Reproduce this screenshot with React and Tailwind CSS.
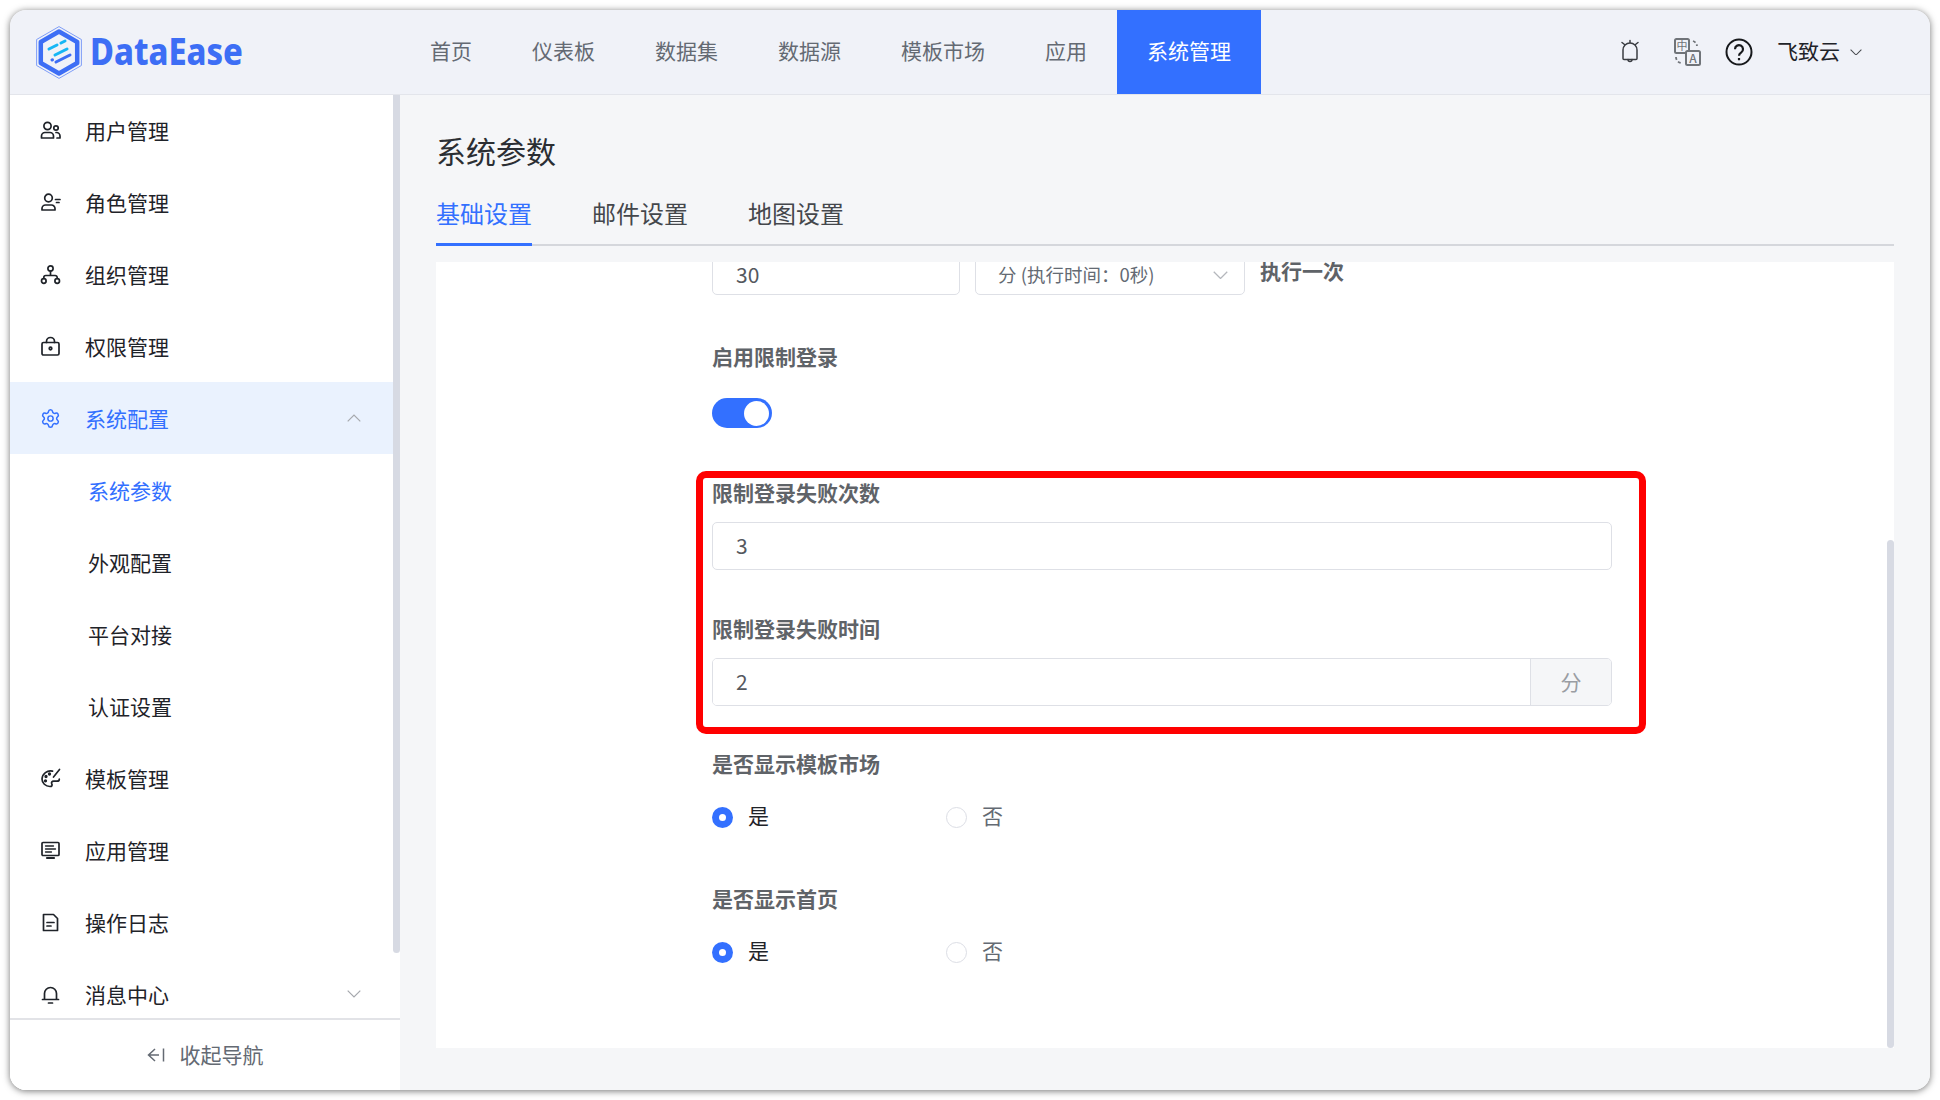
import React from 'react';
import { Settings } from 'lucide-react';

const NAV_ITEMS = ['首页', '仪表板', '数据集', '数据源', '模板市场', '应用'];

const Icon = ({ children, className = 'text-[#1f2329]' }) => (
  <svg viewBox="0 0 21 21" fill="none" stroke="currentColor" strokeWidth="1.7" strokeLinecap="round" strokeLinejoin="round" className={`w-[21px] h-[21px] shrink-0 ${className}`}>
    {children}
  </svg>
);

const UsersIcon = () => (
  <Icon>
    <circle cx="7.5" cy="6" r="3.6" />
    <path d="M1.5 18v-2a3.5 3.5 0 0 1 3.5-3.5h5a3.5 3.5 0 0 1 3.5 3.5v2z" />
    <circle cx="16" cy="8" r="2.2" />
    <path d="M16 12.5h.5a3.5 3.5 0 0 1 3.5 3.5v2h-3" />
  </Icon>
);
const RoleIcon = () => (
  <Icon>
    <circle cx="8.5" cy="6" r="3.8" />
    <path d="M2 18v-1.5A3.5 3.5 0 0 1 5.500 13h6a3.500 3.500 0 0 1 3.500 3.500V18z" />
    <path d="M15.500 7.500h4.500M16.500 10.500h2.500" />
  </Icon>
);
const OrgIcon = () => (
  <Icon>
    <circle cx="10.500" cy="4.500" r="2.600" />
    <circle cx="3.800" cy="17" r="2.300" />
    <circle cx="17.200" cy="17" r="2.300" />
    <path d="M10.500 7.200v4.300M3.800 14.500v-1a2 2 0 0 1 2-2h9.400a2 2 0 0 1 2 2v1" />
  </Icon>
);
const LockIcon = () => (
  <Icon>
    <rect x="2" y="6.500" width="17" height="12.500" rx="1.500" />
    <path d="M6.500 6.500V5.500a4 4 0 0 1 8 0v1" />
    <circle cx="10.500" cy="12.500" r="1.300" />
  </Icon>
);
const PaletteIcon = () => (
  <Icon>
    <path d="M12.500 3.200A8.500 8.500 0 0 0 2 11c0 4 3.500 7.500 8 7.500 2 0 2.500-1.300 1.800-2.500-.8-1.400.2-2.800 1.800-2.800H17c1.300 0 2.300-.7 2.300-2" />
    <path d="M19.500 1.500l-6 7.500" />
    <circle cx="6" cy="8.500" r=".8" />
    <circle cx="5.500" cy="12.800" r=".8" />
    <circle cx="9.500" cy="6" r=".8" />
  </Icon>
);
const MonitorIcon = () => (
  <Icon>
    <rect x="2" y="2.500" width="17" height="13" rx="1" />
    <path d="M5.500 6h8M5.500 9h10M5.500 12h6" strokeWidth="1.300" />
    <path d="M7 18h7" strokeWidth="2.200" />
  </Icon>
);
const DocIcon = () => (
  <Icon>
    <path d="M3.500 2.500h10l4 4v12h-14z" />
    <path d="M7 10.500h7M7 14h4" />
  </Icon>
);
const BellIcon = () => (
  <Icon>
    <path d="M4.500 15V9.500a6 6 0 0 1 12 0V15" />
    <path d="M2.500 15.500h16" />
    <path d="M8.500 19h4" />
  </Icon>
);

const Chevron = ({ up, className = 'w-[14px] text-[#a5a8ad]' }) => (
  <svg viewBox="0 0 14 8" fill="none" stroke="currentColor" strokeWidth="1.200" className={`shrink-0 ${className}`}>
    <path d={up ? 'M.7 7.300 7 1l6.300 6.300' : 'M.7.700 7 7 13.300.700'} />
  </svg>
);

const Logo = () => (
  <svg viewBox="0 0 46 53" fill="none" className="w-[46px] h-[53px] shrink-0">
    <path d="M23 .6 45.400 13.500v26L23 52.400.6 39.500v-26z" stroke="#7e9df7" strokeWidth="1" />
    <path d="M23 5.500 41.200 16v21L23 47.500 4.800 37V16z" stroke="#3d6ef5" strokeWidth="4.500" strokeLinejoin="round" />
    <path d="M13 23l8-4M25 17l4-2M19 29l12-6" stroke="#16b6f5" strokeWidth="3" strokeLinecap="round" />
    <path d="M20 36l14-7M16 34l.5-.2" stroke="#3d6ef5" strokeWidth="3" strokeLinecap="round" />
  </svg>
);

const MENU_TOP = [
  { label: '用户管理', icon: <UsersIcon /> },
  { label: '角色管理', icon: <RoleIcon /> },
  { label: '组织管理', icon: <OrgIcon /> },
  { label: '权限管理', icon: <LockIcon /> },
];
const SUB_MENU = ['系统参数', '外观配置', '平台对接', '认证设置'];
const MENU_BOTTOM = [
  { label: '模板管理', icon: <PaletteIcon /> },
  { label: '应用管理', icon: <MonitorIcon /> },
  { label: '操作日志', icon: <DocIcon /> },
];

const MenuRow = ({ item }) => (
  <div className="flex items-center h-[72px] pl-[30px] shrink-0 text-[#1f2329]">
    <span className="mr-[24px] flex">{item.icon}</span>
    <span>{item.label}</span>
  </div>
);

const Sidebar = () => (
  <aside className="w-[390px] shrink-0 bg-white flex flex-col relative">
    <div className="flex-1 overflow-hidden">
      <div className="-mt-[1px] w-[383px] text-[21px] leading-[32px]">
        {MENU_TOP.map((item) => <MenuRow key={item.label} item={item} />)}
        <div className="flex items-center h-[72px] pl-[30px] pr-[32px] bg-[#eaf2fe] text-[#3370ff]">
          <span className="mr-[24px] flex"><Settings size={21} strokeWidth={1.7} /></span>
          <span>系统配置</span>
          <span className="ml-auto"><Chevron up /></span>
        </div>
        {SUB_MENU.map((label, i) => (
          <div key={label} className={`flex items-center h-[72px] pl-[78px] ${i === 0 ? 'text-[#3370ff]' : 'text-[#1f2329]'}`}>
            {label}
          </div>
        ))}
        {MENU_BOTTOM.map((item) => <MenuRow key={item.label} item={item} />)}
        <div className="flex items-center h-[72px] pl-[30px] pr-[32px] text-[#1f2329]">
          <span className="mr-[24px] flex"><BellIcon /></span>
          <span>消息中心</span>
          <span className="ml-auto"><Chevron /></span>
        </div>
      </div>
    </div>
    {/* scroll thumb */}
    <div className="absolute right-0 top-0 w-[7px] h-[858px] bg-[#d7dae3] rounded-b-[4px]"></div>
    <div className="h-[72px] shrink-0 border-t-2 border-[#e2e3e7] flex items-center justify-center text-[21px] text-[#646a73] bg-white pb-[1px]">
      <svg viewBox="0 0 18 16" fill="none" stroke="currentColor" strokeWidth="1.500" className="w-[18px] h-[16px] mr-[15px]">
        <path d="M8 2 1.500 8 8 14M1.500 8H12M16.500 1.500v13" />
      </svg>
      收起导航
    </div>
  </aside>
);

const Header = () => (
  <header className="h-[85px] shrink-0 flex bg-[#f0f2f8] border-b border-[#e3e5eb] text-[21px] rounded-t-[16px]">
    <div className="w-[390px] shrink-0 flex items-center pl-[26px]">
      <Logo />
      <span className="ml-[8px] mb-[5px] text-[38px] font-extrabold text-[#3d6ef5] font-['Noto_Sans',sans-serif] leading-none scale-x-[0.86] origin-left">DataEase</span>
    </div>
    {NAV_ITEMS.map((name) => (
      <div key={name} className="px-[30px] pb-[2px] flex items-center text-[#646a73]">{name}</div>
    ))}
    <div className="px-[30px] pb-[2px] flex items-center bg-[#3370ff] text-white h-[84px]">系统管理</div>
    <div className="ml-auto flex items-center pr-[68px] text-[#1f2329]">
      <svg viewBox="0 0 20 26" fill="none" stroke="#3a3d42" strokeWidth="1.500" strokeLinecap="round" strokeLinejoin="round" className="w-[20px] h-[26px]">
        <path d="M3 19.500V11a7 7 0 0 1 14 0v8.500a1 1 0 0 1-1 1H4a1 1 0 0 1-1-1z" />
        <path d="M8 20.500a2 2 0 0 0 4 0M2 3.500 4.500 5.500M18 3.500 15.500 5.500M10 1.500v2" />
      </svg>
      <svg viewBox="0 0 27 28" fill="none" className="w-[27px] h-[28px] ml-[34px]">
        <rect x="1" y="1" width="14" height="14" rx="1.500" stroke="#707479" strokeWidth="2" fill="#f0f2f8" />
        <text x="8" y="12" textAnchor="middle" fontSize="11" fill="#707479" stroke="none">中</text>
        <rect x="12" y="13" width="14" height="14" rx="1.500" stroke="#707479" strokeWidth="2" fill="#f0f2f8" />
        <text x="19" y="24.500" textAnchor="middle" fontSize="12" fontWeight="500" fill="#707479" stroke="none">A</text>
        <path d="M19 3a6 6 0 0 1 4 5M2 19a6 6 0 0 0 5 6" stroke="#707479" strokeWidth="1.800" strokeDasharray="3 2" />
      </svg>
      <svg viewBox="0 0 28 28" fill="none" stroke="#17191c" strokeWidth="2" className="w-[28px] h-[28px] ml-[24px]">
        <circle cx="14" cy="14" r="12.500" />
        <path d="M10 11.200a4 4 0 1 1 6.300 3.200c-1.500 1-2.300 1.700-2.300 3.300" strokeWidth="2.200" />
        <path d="M14 20v2.200" strokeWidth="2.200" />
      </svg>
      <span className="ml-[24px] pb-[2px]">飞致云</span>
      <Chevron className="w-[12px] ml-[10px] text-[#44474c]" />
    </div>
  </header>
);

const FormLabel = ({ children }) => (
  <div className="h-[32px] leading-[29px] text-[21px] font-bold text-[#5f6368] mb-[12px]">{children}</div>
);

const Radio = ({ checked, label }) => (
  <label className="flex items-center w-[234px]">
    {checked ? (
      <span className="w-[21px] h-[21px] rounded-full bg-[#3370ff] flex items-center justify-center">
        <span className="w-[7px] h-[7px] rounded-full bg-white"></span>
      </span>
    ) : (
      <span className="w-[21px] h-[21px] rounded-full border border-[#dcdee5] bg-white"></span>
    )}
    <span className={`ml-[15px] pb-[2px] ${checked ? 'text-[#1f2329]' : 'text-[#646a73]'}`}>{label}</span>
  </label>
);

const RadioGroup = () => (
  <div className="h-[48px] flex items-center text-[21px]">
    <Radio checked label="是" />
    <Radio label="否" />
  </div>
);

const inputClass = 'w-full h-[48px] pl-[23px] pr-[22px] pb-[2px] text-[21px] text-[#55585e] bg-white outline-none';

const Form = () => (
  <div className="-mt-[15px] ml-[276px] w-[900px]">
    <div className="flex mb-[47px] text-[18.500px] text-[#646a73]">
      <input readOnly value="30" className="w-[248px] h-[48px] pl-[23px] pt-[6px] text-[21px] text-[#55585e] bg-white outline-none border border-[#dee0e6] rounded-[5px]" />
      <div className="w-[270px] ml-[15px] h-[48px] border border-[#dee0e6] rounded-[5px] flex items-center pl-[22px] pr-[16px] pt-[8px]">
        <span>分 (执行时间：0秒)</span>
        <span className="ml-auto"><Chevron className="w-[15px] text-[#b4b7bc]" /></span>
      </div>
      <div className="ml-[15px] text-[21px] font-bold text-[#5f6368] leading-[46px]">执行一次</div>
    </div>

    <div className="mb-[44px]">
      <FormLabel>启用限制登录</FormLabel>
      <div className="h-[48px] pt-[12px]">
        <div className="w-[60px] h-[30px] rounded-full bg-[#3370ff] flex items-center justify-end pr-[3px]">
          <span className="w-[25px] h-[25px] rounded-full bg-white"></span>
        </div>
      </div>
    </div>

    <div className="mb-[44px]">
      <FormLabel>限制登录失败次数</FormLabel>
      <input readOnly value="3" className={`${inputClass} border border-[#dee0e6] rounded-[5px]`} />
    </div>

    <div className="mb-[43px]">
      <FormLabel>限制登录失败时间</FormLabel>
      <div className="flex h-[48px] border border-[#dee0e6] rounded-[5px] overflow-hidden">
        <input readOnly value="2" className={`${inputClass} h-full flex-1 min-w-0`} />
        <div className="w-[81px] shrink-0 flex items-center justify-center border-l border-[#dee0e6] bg-[#f5f6f8] text-[21px] text-[#9a9da3]">分</div>
      </div>
    </div>

    <div className="mb-[43px]">
      <FormLabel>是否显示模板市场</FormLabel>
      <RadioGroup />
    </div>

    <div>
      <FormLabel>是否显示首页</FormLabel>
      <RadioGroup />
    </div>
  </div>
);

const Main = () => (
  <main className="flex-1 min-w-0 bg-[#f5f6f8] px-[36px] pt-[35px] flex flex-col">
    <h1 className="text-[30px] leading-[40px] text-[#2b2e33]">系统参数</h1>
    <div className="mt-[27px] h-[49px] flex gap-[60px] border-b-2 border-[#d5d7dc] text-[24px] leading-[32px] text-[#44474c]">
      <div className="relative text-[#3370ff]">
        基础设置
        <span className="absolute left-0 right-0 top-[46px] h-[3px] bg-[#3370ff]"></span>
      </div>
      <div>邮件设置</div>
      <div>地图设置</div>
    </div>
    <section className="relative mt-[16px] h-[786px] bg-white overflow-hidden">
      <Form />
      {/* annotation frame */}
      <div className="absolute left-[260px] top-[209px] w-[950px] h-[263px] border-[7px] border-[#ff0000] rounded-[10px] pointer-events-none"></div>
      {/* scroll thumb */}
      <div className="absolute right-0 top-[278px] bottom-0 w-[7px] bg-[#d7dae3] rounded-[4px]"></div>
    </section>
  </main>
);

export default function App() {
  return (
    <div className="w-[1940px] h-[1100px] p-[10px] bg-white overflow-hidden font-['Noto_Sans_CJK_SC','Noto_Sans',sans-serif]">
      <div className="w-full h-full flex flex-col rounded-[16px] shadow-[0_1px_7px_rgba(0,0,0,0.55)] overflow-hidden bg-[#f5f6f8]">
        <Header />
        <div className="flex-1 min-h-0 flex">
          <Sidebar />
          <Main />
        </div>
      </div>
    </div>
  );
}
